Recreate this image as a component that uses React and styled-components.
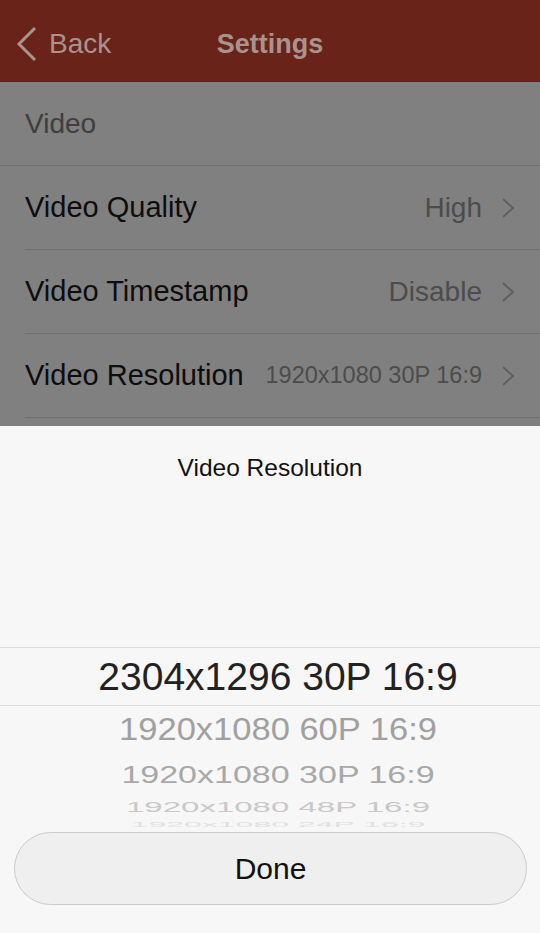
import React from 'react'
import styled, { createGlobalStyle } from 'styled-components'

const GlobalStyle = createGlobalStyle`
  html, body {
    margin: 0;
    padding: 0;
    background: #f7f7f7;
  }
  body {
    font-family: "Liberation Sans", Arial, sans-serif;
  }
`

const Screen = styled.div`
  width: 540px;
  height: 933px;
  display: flex;
  flex-direction: column;
  overflow: hidden;
`

const NavBar = styled.header`
  height: 82px;
  flex-shrink: 0;
  padding-top: 7px;
  background: #6a2318;
  display: grid;
  grid-template-columns: 1fr auto 1fr;
  align-items: center;
  color: #a8948f;
  border-bottom: 1px solid #5c1f17;
  box-sizing: border-box;
`

const BackButton = styled.div`
  display: flex;
  align-items: center;
  gap: 11px;
  padding-left: 16px;
  font-size: 28px;
`

const Title = styled.div`
  font-size: 27px;
  font-weight: 700;
`

const Dimmed = styled.div`
  height: 344px;
  flex-shrink: 0;
  background: #808080;
  overflow: hidden;
`

const SectionHeader = styled.div`
  height: 83px;
  display: flex;
  align-items: center;
  padding-left: 25px;
  font-size: 28px;
  color: #3e3e3e;
  border-bottom: 1px solid #707070;
`

const Row = styled.div`
  height: 84px;
  margin-left: 25px;
  display: flex;
  align-items: center;
  border-bottom: 1px solid #707070;
  box-sizing: border-box;
`

const Label = styled.span`
  font-size: 29px;
  color: #0d0d0d;
  flex: 1;
`

const Value = styled.span`
  font-size: ${p => (p.$small ? '23.5px' : '28px')};
  color: #4c4c4c;
  margin-right: 18px;
`

const Chevron = styled.svg`
  width: 16px;
  height: 22px;
  margin-right: 24px;
`

const Sheet = styled.div`
  flex: 1;
  background: #f7f7f7;
  display: flex;
  flex-direction: column;
`

const SheetTitle = styled.div`
  padding-top: 30px;
  line-height: 24px;
  font-size: 24.5px;
  text-align: center;
  color: #111;
`

const Wheel = styled.div`
  margin-top: 167px;
  height: 181px;
  overflow: hidden;
  display: flex;
  flex-direction: column;
`

const Selected = styled.div`
  height: 59px;
  flex-shrink: 0;
  box-sizing: border-box;
  border-top: 1px solid #dcdcdc;
  border-bottom: 1px solid #dcdcdc;
  display: flex;
  align-items: center;
  justify-content: center;
  padding-left: 16px;
  font-size: 39px;
  color: #222;
`

const WheelItem = styled.div`
  height: ${p => p.$h}px;
  flex-shrink: 0;
  display: flex;
  align-items: center;
  justify-content: center;
  padding-left: 16px;
  font-size: ${p => p.$size}px;
  color: ${p => p.$color};
  transform: scaleY(${p => p.$squash});
  white-space: nowrap;
`

const DoneButton = styled.button`
  margin: 4px 13px 0 14px;
  height: 73px;
  border-radius: 37px;
  border: 1px solid #cbcbcb;
  background: #efefef;
  font-family: "Liberation Sans", Arial, sans-serif;
  font-size: 30px;
  color: #111;
`

const items = [
  { text: '1920x1080 60P 16:9', h: 47, size: 34.5, color: '#a0a0a0', squash: 0.93 },
  { text: '1920x1080 30P 16:9', h: 43, size: 34, color: '#a8a8a8', squash: 0.72 },
  { text: '1920x1080 48P 16:9', h: 22, size: 33, color: '#c8c8c8', squash: 0.43 },
  { text: '1920x1080 24P 16:9', h: 14, size: 32, color: '#e0e0e0', squash: 0.2 },
]

function RowChevron() {
  return (
    <Chevron viewBox="0 0 16 22">
      <path d="M3 2 L13 11 L3 20" fill="none" stroke="#5e5e5e" strokeWidth="2" />
    </Chevron>
  )
}

export default function App() {
  return (
    <Screen>
      <GlobalStyle />
      <NavBar>
        <BackButton>
          <svg width="22" height="36" viewBox="0 0 22 36">
            <path d="M19 2 L3 18 L19 34" fill="none" stroke="#a8948f" strokeWidth="3" />
          </svg>
          Back
        </BackButton>
        <Title>Settings</Title>
        <div />
      </NavBar>
      <Dimmed>
        <SectionHeader>Video</SectionHeader>
        <Row>
          <Label>Video Quality</Label>
          <Value>High</Value>
          <RowChevron />
        </Row>
        <Row>
          <Label>Video Timestamp</Label>
          <Value>Disable</Value>
          <RowChevron />
        </Row>
        <Row>
          <Label>Video Resolution</Label>
          <Value $small>1920x1080 30P 16:9</Value>
          <RowChevron />
        </Row>
        <Row />
      </Dimmed>
      <Sheet>
        <SheetTitle>Video Resolution</SheetTitle>
        <Wheel>
          <Selected>2304x1296 30P 16:9</Selected>
          {items.map(it => (
            <WheelItem key={it.text} $h={it.h} $size={it.size} $color={it.color} $squash={it.squash}>
              {it.text}
            </WheelItem>
          ))}
        </Wheel>
        <DoneButton>Done</DoneButton>
      </Sheet>
    </Screen>
  )
}
